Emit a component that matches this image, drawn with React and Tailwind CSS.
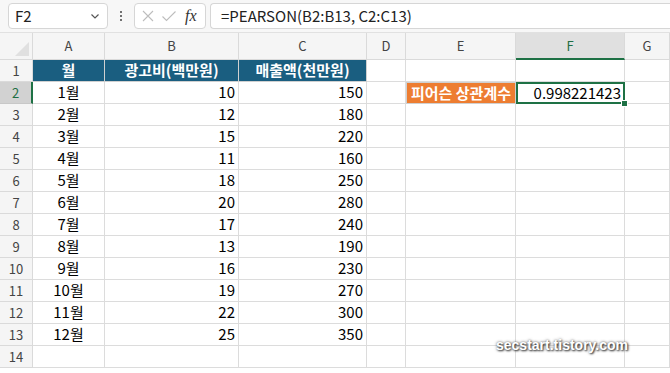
import React from "react";

const rows = [
  ["1월", 10, 150],
  ["2월", 12, 180],
  ["3월", 15, 220],
  ["4월", 11, 160],
  ["5월", 18, 250],
  ["6월", 20, 280],
  ["7월", 17, 240],
  ["8월", 13, 190],
  ["9월", 16, 230],
  ["10월", 19, 270],
  ["11월", 22, 300],
  ["12월", 25, 350],
];

const cols = ["A", "B", "C", "D", "E", "F", "G"];
const font = { fontFamily: '"Noto Sans CJK KR", "Noto Sans", sans-serif' };

function RowHead({ n, active }) {
  return (
    <div
      className={`flex items-center justify-center text-[13px] border-b border-r ${
        active
          ? "bg-[#d2d2d2] text-[#1e6e43] border-r-2 border-r-[#1e7145] border-b-[#c8c8c8]"
          : "bg-[#f5f5f5] text-[#444] border-[#dadada]"
      }`}
    >
      {n}
    </div>
  );
}

function Cell({ children, className = "" }) {
  return (
    <div className={`flex items-center border-r border-b border-[#dcdcdc] text-[15px] text-black ${className}`}>
      {children}
    </div>
  );
}

export default function App() {
  return (
    <div className="w-[670px] h-[373px] overflow-hidden bg-white" style={font}>
      {/* formula bar */}
      <div className="h-[33px] flex items-center gap-[4px] pl-[8px] bg-[#f7f7f7] border-b border-[#e1e1e1]">
        <div className="w-[100px] h-[26px] bg-white rounded-[4px] border border-[#d6d6d6] flex items-center justify-between pl-[6px] pr-[6px] text-[15px] text-[#222]">
          <span>F2</span>
          <svg width="12" height="12" viewBox="0 0 12 12">
            <path d="M2.5 4.5 L6 8 L9.5 4.5" fill="none" stroke="#555" strokeWidth="1.2" />
          </svg>
        </div>
        <div className="w-[18px] flex flex-col items-center gap-[2px]">
          <span className="w-[2px] h-[2px] bg-[#444] rounded-full" />
          <span className="w-[2px] h-[2px] bg-[#444] rounded-full" />
          <span className="w-[2px] h-[2px] bg-[#444] rounded-full" />
        </div>
        <div className="w-[72px] h-[26px] bg-white rounded-[4px] border border-[#d6d6d6] flex items-center gap-[6px] pl-[6px]">
          <svg width="14" height="14" viewBox="0 0 14 14">
            <path d="M2 2 L12 12 M12 2 L2 12" stroke="#bdbdbd" strokeWidth="1.1" />
          </svg>
          <svg width="16" height="14" viewBox="0 0 16 14">
            <path d="M1.5 7.5 L5.5 11.5 L14.5 2.5" fill="none" stroke="#bdbdbd" strokeWidth="1.1" />
          </svg>
          <span className="italic text-[16px] text-[#333] ml-[2px]" style={{ fontFamily: '"Liberation Serif", serif' }}>
            fx
          </span>
        </div>
        <div className="flex-1 h-[26px] bg-white rounded-l-[4px] border border-r-0 border-[#d6d6d6] flex items-center pl-[10px] text-[15px] text-[#222]">
          =PEARSON(B2:B13, C2:C13)
        </div>
      </div>

      {/* grid */}
      <div className="grid grid-cols-[33px_72px_134px_128px_39px_110px_109px_1fr] grid-rows-[27px_repeat(14,22px)]">
        {/* corner */}
        <div className="relative bg-[#f5f5f5] border-r border-b border-[#dadada]">
          <svg className="absolute right-[3px] bottom-[3px]" width="14" height="14" viewBox="0 0 14 14">
            <path d="M14 0 L14 14 L0 14 Z" fill="#e0e0e0" />
          </svg>
        </div>
        {cols.map((c) => (
          <div
            key={c}
            className={`flex items-center justify-center text-[13px] border-r ${
              c === "F"
                ? "bg-[#e0e0e0] text-[#1e6e43] border-b-2 border-b-[#1e7145] border-r-[#dadada]"
                : "bg-[#f5f5f5] text-[#444] border-b border-[#dadada]"
            }`}
          >
            {c}
          </div>
        ))}

        {/* row 1 */}
        <RowHead n={1} />
        {["월", "광고비(백만원)", "매출액(천만원)"].map((h) => (
          <div
            key={h}
            className="flex items-center justify-center bg-[#1a5e80] text-white font-bold text-[15px] border-r border-b border-[#d0d0d0]"
          >
            {h}
          </div>
        ))}
        <Cell />
        <Cell />
        <Cell />
        <Cell />

        {rows.map(([m, a, s], i) => (
          <React.Fragment key={m}>
            <RowHead n={i + 2} active={i === 0} />
            <Cell className="justify-center border-[#c8c8c8]">{m}</Cell>
            <Cell className="justify-end pr-[3px] border-[#c8c8c8]">{a}</Cell>
            <Cell className="justify-end pr-[3px] border-[#c8c8c8]">{s}</Cell>
            <Cell />
            {i === 0 ? (
              <>
                <div className="flex items-center justify-center bg-[#ed7d31] text-white font-bold text-[15px] border border-[#d0d0d0]">
                  피어슨 상관계수
                </div>
                <div className="relative flex items-center justify-end pr-[2px] text-[15px] text-black border-2 border-[#1e7145]">
                  0.998221423
                  <span className="absolute right-[-5px] bottom-[-5px] w-[7px] h-[7px] bg-[#1e7145] border border-white" />
                </div>
              </>
            ) : (
              <>
                <Cell />
                <Cell />
              </>
            )}
            <Cell />
          </React.Fragment>
        ))}

        <RowHead n={14} />
        {cols.map((c) => (
          <Cell key={c} />
        ))}
      </div>

      <div
        className="relative top-[-32px] ml-[496px] text-white font-bold text-[14px] leading-[18px] w-fit"
        style={{ fontFamily: '"Liberation Sans", Arial, sans-serif', textShadow: "1px 1px 2px #333, 0 0 3px #555" }}
      >
        secstart.tistory.com
      </div>
    </div>
  );
}
